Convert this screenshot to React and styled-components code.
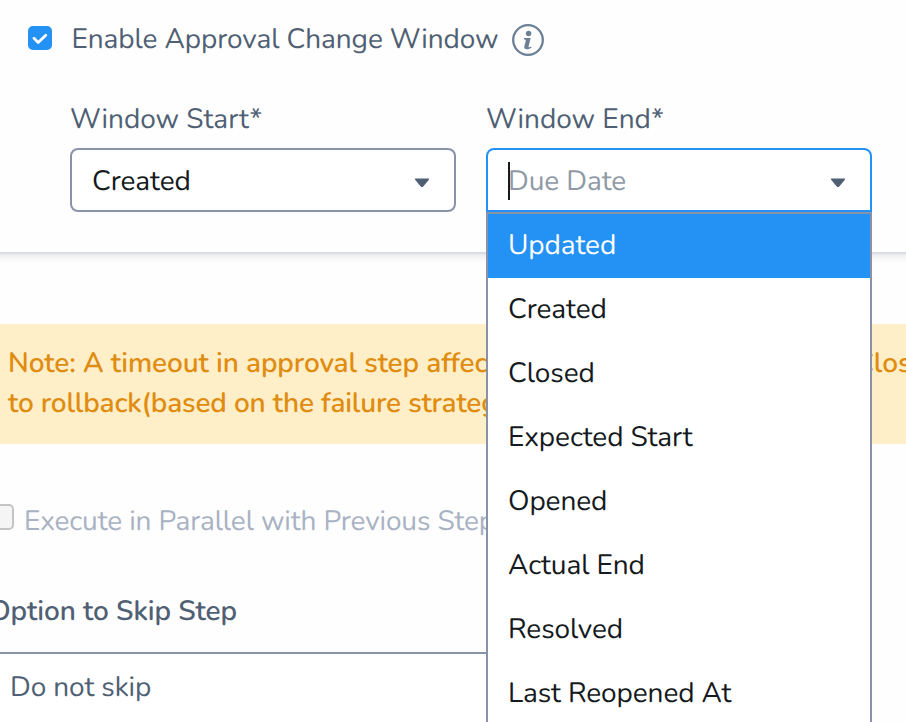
import React from 'react';
import styled, { createGlobalStyle, css } from 'styled-components';

const GlobalStyle = createGlobalStyle`
  * { box-sizing: border-box; }
  body {
    margin: 0;
    background: #fefefe;
    overflow: hidden;
  }
`;

const Page = styled.main`
  width: 906px;
  height: 722px;
  overflow: hidden;
  display: flex;
  flex-direction: column;
  background: #fefefe;
  color: #4f6074;
  font-family: Nunito, Lato, sans-serif;
  font-size: 28px;
  line-height: 40px;
  letter-spacing: -0.09px;
  text-rendering: geometricPrecision;
  white-space: nowrap;
`;

const WindowPanel = styled.section`
  flex: none;
  height: 254px;
  margin: 0 -20px;
  padding: 19px 20px 0;
  border-bottom: 2px solid #d9dce5;
  box-shadow: 0 2px 8px rgba(40, 50, 80, 0.13);
`;

const ToggleRow = styled.label`
  display: flex;
  height: 40px;
  padding-left: 28px;
`;

const CheckedBox = styled.span`
  display: grid;
  place-items: center;
  width: 24px;
  height: 24px;
  margin: 7px 19.5px 0 0;
  border-radius: 5px;
  background: #2491f5;
`;

const ToggleText = styled.span`
  width: 440.5px;
`;

const InfoIcon = styled.svg`
  margin-top: 5px;
`;

const Fields = styled.div`
  display: grid;
  grid-template-columns: 386px 386px;
  column-gap: 30px;
  padding: 40px 0 0 70px;
`;

const Field = styled.div`
  position: relative;
  display: flex;
  flex-direction: column;
`;

const FieldLabel = styled.div`
  height: 49px;
  letter-spacing: 0;
`;

const SelectBox = styled.div`
  display: flex;
  align-items: flex-start;
  justify-content: space-between;
  height: 64px;
  padding: 11px 24px 0 20px;
  border: 2px solid #8892a9;
  border-radius: 8px;
  background: #fff;
  color: #151a21;
  ${({ $open }) => $open && css`
    border-color: #2491f5;
    border-radius: 8px 8px 0 0;
    color: #8f9aa6;
  `}
`;

const Value = styled.span`
  display: flex;
  align-items: center;
`;

const Cursor = styled.span`
  width: 2px;
  height: 38px;
  margin: 0 -2px 0 0;
  background: #151a21;
`;

const Arrow = styled.svg`
  margin-top: 17px;
`;

const Menu = styled.ul`
  position: absolute;
  z-index: 2;
  top: 113px;
  left: 0;
  width: 386px;
  margin: 0;
  padding: 0;
  border: 2px solid #8892a9;
  background: #fff;
  list-style: none;
`;

const MenuItem = styled.li`
  height: 64px;
  padding: 11px 20px 0;
  color: ${({ $active }) => ($active ? '#fff' : '#151a21')};
  background: ${({ $active }) => ($active ? '#2491f5' : '#fff')};
`;

const Notice = styled.section`
  flex: none;
  height: 120px;
  margin-top: 70px;
  padding: 19px 0 0 8px;
  background: #ffefc8;
  color: #e08c10;
  font-weight: 600;
`;

const NoticeLine = styled.div`
  display: flex;
  letter-spacing: ${({ $track }) => $track}px;
`;

const NoticeStart = styled.span`
  flex: none;
  width: 847px;
`;

const ParallelRow = styled.label`
  display: flex;
  margin-top: 57px;
  color: #a9b2c3;
  letter-spacing: -0.11px;
`;

const EmptyBox = styled.span`
  width: 26px;
  height: 26px;
  margin: 3px 10px 0 -12px;
  border: 2px solid #c4c4c4;
  border-radius: 5px;
  background: #f5f5f5;
`;

const SkipLabel = styled.h2`
  margin: 50px 0 0 -11px;
  font-size: inherit;
  font-weight: 600;
`;

const SkipSelect = styled.div`
  flex: none;
  width: 800px;
  height: 90px;
  margin: 21px 0 0 -12px;
  padding: 13px 0 0 20px;
  border: 2px solid #8892a9;
  border-radius: 8px;
  background: #fff;
`;

const options = [
  'Updated',
  'Created',
  'Closed',
  'Expected Start',
  'Opened',
  'Actual End',
  'Resolved',
  'Last Reopened At',
];

const Caret = () => (
  <Arrow width="16" height="10" viewBox="0 0 16 10" aria-hidden="true">
    <path d="M2 .5h12c1 0 1.3.7.7 1.4L9 8.7c-.6.6-1.4.6-2 0L1.3 1.9C.7 1.2 1 .5 2 .5Z" fill="#4f6074" />
  </Arrow>
);

export default function App() {
  return (
    <>
      <GlobalStyle />
      <Page>
        <WindowPanel>
          <ToggleRow>
            <CheckedBox>
              <svg width="24" height="24" viewBox="0 0 24 24" fill="none" stroke="#fff" strokeWidth="2.8" strokeLinecap="round" strokeLinejoin="round">
                <path d="m6 12.3 4.2 4.2 7.6-7.3" />
              </svg>
            </CheckedBox>
            <ToggleText>Enable Approval Change Window</ToggleText>
            <InfoIcon width="32" height="32" viewBox="0 0 32 32" fill="#6b7f95">
              <circle cx="16" cy="16" r="14.8" fill="none" stroke="#6b7f95" strokeWidth="2.3" />
              <circle cx="16.6" cy="9.5" r="2.7" />
              <path d="M12 13.9h6.7l-2.1 8.3c-.2.9.2 1.2.8 1 .6-.1 1-.3 1.6-.7l.6.9c-1.3 1.2-2.9 1.8-4.7 1.8-2.1 0-3-1.1-2.6-2.7l1.4-5.5c.2-.9 0-1.4-.8-1.5L12 15.3Z" />
            </InfoIcon>
          </ToggleRow>
          <Fields>
            <Field>
              <FieldLabel>Window Start*</FieldLabel>
              <SelectBox>
                <Value>Created</Value>
                <Caret />
              </SelectBox>
            </Field>
            <Field>
              <FieldLabel>Window End*</FieldLabel>
              <SelectBox $open>
                <Value>
                  <Cursor />
                  Due Date
                </Value>
                <Caret />
              </SelectBox>
              <Menu>
                {options.map((label, index) => (
                  <MenuItem key={label} $active={index === 0}>{label}</MenuItem>
                ))}
              </Menu>
            </Field>
          </Fields>
        </WindowPanel>
        <Notice>
          <NoticeLine $track={-0.1}>
            <NoticeStart>Note: A timeout in approval step affec</NoticeStart>
            <span>Clos</span>
          </NoticeLine>
          <NoticeLine $track={-0.18}>to rollback(based on the failure strateg</NoticeLine>
        </Notice>
        <ParallelRow>
          <EmptyBox />
          Execute in Parallel with Previous Step
        </ParallelRow>
        <SkipLabel>Option to Skip Step</SkipLabel>
        <SkipSelect>Do not skip</SkipSelect>
      </Page>
    </>
  );
}
